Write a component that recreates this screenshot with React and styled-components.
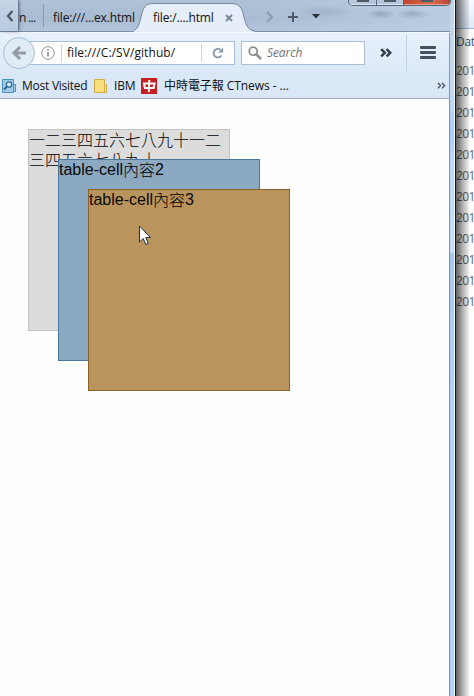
import React from "react";
import styled, { createGlobalStyle } from "styled-components";

const Global = createGlobalStyle`
  * { box-sizing: border-box; }
  body { margin: 0; background: #fff; overflow: hidden; }
`;

const Desktop = styled.div`
  display: flex;
  width: 474px;
  height: 696px;
  overflow: hidden;
  font: 12px/16px "Open Sans", "Noto Sans CJK TC", sans-serif;
  color: #111;
`;

const Browser = styled.main`
  flex: none;
  display: flex;
  flex-direction: column;
  width: 450px;
`;

const TabStrip = styled.header`
  position: relative;
  flex: none;
  display: flex;
  align-items: center;
  height: 32px;
  background:
    radial-gradient(ellipse 14px 5px at 381px 14px, #94a8bf 0, transparent 100%),
    radial-gradient(ellipse 18px 5px at 413px 14px, #98acc3 0, transparent 100%),
    radial-gradient(ellipse 30px 7px at 325px 12px, #a0b3ca 0, transparent 100%),
    linear-gradient(90deg, transparent 250px, #c5d5e890 430px),
    linear-gradient(#afc1d6, #a9bcd3 60%, #b1c4d9);
  border-bottom: 1px solid #7890ac;
`;

const ScrollLeft = styled.button`
  position: relative;
  display: grid;
  place-items: center;
  flex: none;
  width: 18px;
  height: 31px;
  padding: 0 0 0 1px;
  border: 0;
  background: linear-gradient(#c5d4e6, #b9cbe0);
  box-shadow: 1px 0 3px #435167;
`;

const Tab = styled.div`
  flex: none;
  width: ${(p) => p.$width}px;
  padding: 4px 0 0 ${(p) => p.$inset}px;
  height: 23px;
  line-height: 19px;
  white-space: nowrap;
  letter-spacing: ${(p) => p.$track || 0}px;
  border-right: ${(p) => (p.$divided ? "1px solid #8598b0" : "0")};
`;

const ActiveTab = styled.div`
  position: relative;
  flex: none;
  display: flex;
  width: 123px;
  height: 32px;
  margin-bottom: -1px;
  & > svg:first-child { position: absolute; inset: 0; }
`;

const ActiveLabel = styled.span`
  position: relative;
  width: 72px;
  margin: 10px 0 0 19px;
  line-height: 16px;
  white-space: nowrap;
  letter-spacing: -0.15px;
`;

const Close = styled.svg`
  position: relative;
  margin-top: 14px;
`;

const StripActions = styled.div`
  display: flex;
  align-items: center;
  gap: 14px;
  margin: 2px 0 0 7px;
`;

const WindowControls = styled.div`
  position: absolute;
  top: 0;
  right: -1px;
  display: flex;
  height: 6px;
  width: 103px;
  border: 1px solid #53647b;
  border-top: 0;
  border-radius: 0 0 5px 5px;
  overflow: hidden;
`;

const Control = styled.span`
  flex: 0 0 ${(p) => p.$width}px;
  display: flex;
  justify-content: center;
  border-right: 1px solid #53647b;
  background: ${(p) => (p.$danger ? "linear-gradient(90deg,#c3442d,#dc6b50 60%,#b94a39)" : "#b6c7db")};
  box-shadow: inset 0 -1px 0 ${(p) => (p.$danger ? "#e9a491" : "#d9e6f4")};
  &::before { content: ""; width: 12px; height: 2px; background: #505b6a; }
`;

const NavBar = styled.div`
  flex: none;
  display: flex;
  align-items: center;
  height: 40px;
  background: linear-gradient(#e8f1fb, #dce9f7);
  border-top: 1px solid #f2f8ff;
  border-right: 1px solid #8298b3;
  border-radius: 0 2px 0 0;
`;

const Back = styled.button`
  z-index: 1;
  flex: none;
  display: grid;
  place-items: center;
  width: 32px;
  height: 32px;
  margin: 0 -16px 0 3px;
  padding: 0;
  border: 1px solid #a9bfd8;
  border-radius: 50%;
  background: #e1ebf6;
`;

const Field = styled.div`
  flex: none;
  display: flex;
  align-items: center;
  width: ${(p) => p.$width}px;
  height: 24px;
  padding-left: ${(p) => p.$inset}px;
  margin-left: ${(p) => p.$gap || 0}px;
  background: #fff;
  border: 1px solid #a9c0da;
`;

const Separator = styled.i`
  width: 1px;
  height: ${(p) => p.$height}px;
  margin: 0 ${(p) => p.$after}px 0 ${(p) => p.$before}px;
  background: ${(p) => p.$color};
`;

const Address = styled.span`
  width: 131px;
  white-space: nowrap;
  letter-spacing: 0.07px;
`;

const Hint = styled.span`
  margin-left: 5px;
  color: #747474;
  font-style: italic;
  letter-spacing: -0.1px;
`;

const Overflow = styled.svg`
  flex: none;
  margin-left: ${(p) => p.$gap}px;
`;

const Menu = styled.div`
  display: grid;
  gap: 2px;
  & > i { width: 16px; height: 3px; border-radius: 1px; background: #46515f; }
`;

const Bookmarks = styled.nav`
  flex: none;
  display: flex;
  align-items: center;
  height: 27px;
  padding: 1px 0 0 2px;
  background: #d9e7f6;
  border-bottom: 1px solid #9db0c8;
  border-right: 1px solid #8298b3;
`;

const Bookmark = styled.div`
  display: flex;
  align-items: center;
  flex: none;
  width: ${(p) => p.$width}px;
  white-space: nowrap;
  letter-spacing: ${(p) => p.$track}px;
  & > svg { margin-right: ${(p) => p.$gap}px; flex: none; }
`;

const Page = styled.section`
  position: relative;
  flex: 1;
  background: #fefefe;
  border-right: 1px solid #7f91a6;
`;

const Box = styled.div`
  position: absolute;
  left: ${(p) => p.$x}px;
  top: ${(p) => p.$y}px;
  width: 202px;
  height: 202px;
  background: ${(p) => p.$fill};
  border: 1px solid ${(p) => p.$line};
  font: 16px/20px "Liberation Sans", "Noto Sans CJK TC", sans-serif;
  white-space: pre;
  color: #080808;
`;

const Chars = styled.span`
  display: inline-block;
  vertical-align: top;
  margin-top: -1px;
  font-family: "Noto Sans CJK TC", sans-serif;
  font-weight: 300;
  line-height: 20px;
  color: #000;
`;

const Pointer = styled.svg`
  position: absolute;
  left: 138px;
  top: 126px;
`;

const Frame = styled.div`
  flex: none;
  width: 6px;
  background: linear-gradient(#bfd2e8, #c5d9ef 90px, #a9cdf4 130px, #b9d7f7 160px, #c7dff8 252px, #a6c7ea 253px, #b2d4f8 430px);
  border-right: 1px solid #111820;
  box-shadow: inset -1px 0 #f1f8ff;
`;

const Behind = styled.aside`
  position: relative;
  flex: 1;
  background: #fff;
  overflow: hidden;
  &::after {
    content: "";
    position: absolute;
    inset: 0;
    background: linear-gradient(90deg, #0009 0, #0008 2px, #0005 6px, #0002 11px, #0001 13px, transparent 13px);
  }
`;

const BehindTop = styled.div`
  height: 29px;
  background: linear-gradient(#f7fbff, #dce9f8);
  border-bottom: 1px solid #9fb7d3;
`;

const Column = styled.div`
  padding-top: 5px;
  color: #40536c;
  white-space: nowrap;
  letter-spacing: -0.3px;
`;

const Dates = styled.div`
  margin-top: 10px;
  & > div { height: 21px; line-height: 21px; color: #65656b; letter-spacing: -0.65px; }
`;

const Chevrons = ({ gap, size, width }) => (
  <Overflow $gap={gap} width={size} height={size * 0.8} viewBox="0 0 10 8" fill="none" stroke="#343d49" strokeWidth={width}>
    <path d="M1 1l3 3-3 3M5.5 1l3 3-3 3" />
  </Overflow>
);

const boxes = [
  { x: 28, y: 30, fill: "#dcdcdc", line: "#c2c2c2" },
  { x: 58, y: 60, fill: "#8ca9c2", line: "#4a759c", num: 2 },
  { x: 88, y: 90, fill: "#b9945d", line: "#8b622b", num: 3 },
];

export default function App() {
  return (
    <Desktop>
      <Global />
      <Browser>
        <TabStrip>
          <ScrollLeft aria-label="Scroll tabs">
            <svg width="8" height="12" viewBox="0 0 8 12">
              <path d="M6.500 1L2 6l4.500 5" fill="none" stroke="#4c5561" strokeWidth="2.200" />
            </svg>
          </ScrollLeft>
          <Tab $width={26} $inset={1} $track={-0.7} $divided>n ...</Tab>
          <Tab $width={90} $inset={9} $track={-0.15}>file:///...ex.html</Tab>
          <ActiveTab>
            <svg width="123" height="32" viewBox="0 0 123 32">
              <path d="M-5 31.500C4 31 5 25 7 17C9 8 11 3.500 19 3.500H97C106 3.500 108 8 110 17C112 25 114 31 123 31.500V33H-5Z" fill="#e5eef9" />
              <path d="M-5 31.500C4 31 5 25 7 17C9 8 11 3.500 19 3.500H97C106 3.500 108 8 110 17C112 25 114 31 123 31.500" fill="none" stroke="#7087a3" />
            </svg>
            <ActiveLabel>file:/....html</ActiveLabel>
            <Close width="8" height="8" viewBox="0 0 8 8">
              <path d="M1 1l6 6M7 1L1 7" stroke="#7b8899" strokeWidth="2" />
            </Close>
          </ActiveTab>
          <StripActions>
            <svg width="10" height="12" viewBox="0 0 10 12"><path d="M3 1l5 5-5 5" fill="none" stroke="#8c9cb0" strokeWidth="2" /></svg>
            <svg width="10" height="10" viewBox="0 0 10 10"><path d="M5 0v10M0 5h10" stroke="#4d5b6b" strokeWidth="2" /></svg>
            <svg width="8" height="5" viewBox="0 0 8 5"><path d="M0 0h8L4 4.500z" fill="#26313d" /></svg>
          </StripActions>
          <WindowControls>
            <Control $width={28} />
            <Control $width={27} />
            <Control $width={46} $danger />
          </WindowControls>
        </TabStrip>
        <NavBar>
          <Back aria-label="Back">
            <svg width="16" height="16" viewBox="0 0 16 16"><path d="M9 2L3 8l6 6M3 8h12" fill="none" stroke="#949ca6" strokeWidth="3" /></svg>
          </Back>
          <Field $width={216} $inset={21}>
            <svg width="14" height="14" viewBox="0 0 14 14">
              <circle cx="7" cy="7" r="6.300" fill="none" stroke="#929292" />
              <path d="M7 6v4.500M7 3.200v1.600" stroke="#888" strokeWidth="1.600" />
            </svg>
            <Separator $height={18} $before={6} $after={5} $color="#d5d5d5" />
            <Address>file:///C:/SV/github/</Address>
            <Separator $height={18} $before={3} $after={10} $color="#d5d5d5" />
            <svg width="12" height="12" viewBox="0 0 12 12">
              <path d="M9.500 8.500A4.300 4.300 0 1 1 8.500 2.700" fill="none" stroke="#8796a8" strokeWidth="1.800" />
              <path d="M11.200 .5v5H6.200z" fill="#8796a8" />
            </svg>
          </Field>
          <Field $width={124} $inset={6} $gap={6}>
            <svg width="14" height="14" viewBox="0 0 14 14" fill="none" stroke="#929292">
              <circle cx="5.200" cy="5.200" r="4" strokeWidth="1.800" /><path d="M8 8l5 5" strokeWidth="2.500" />
            </svg>
            <Hint>Search</Hint>
          </Field>
          <Chevrons gap={15} size={12} width={2.1} />
          <Separator $height={36} $before={14} $after={13} $color="#bfd2e8" />
          <Menu><i /><i /><i /></Menu>
        </NavBar>
        <Bookmarks>
          <Bookmark $width={91} $gap={6} $track={-0.25}>
            <svg width="14" height="16" viewBox="0 0 14 16">
              <path d="M.5 1.500h11v13H.5zM11.500 6.500h2v7h-2z" fill="#9fcbe6" stroke="#4f91b8" />
              <circle cx="7" cy="6.500" r="2.700" fill="#d7effc" stroke="#28668f" strokeWidth="1.300" />
              <path d="M5 8.500l-3 3" stroke="#28668f" strokeWidth="1.800" />
            </svg>
            Most Visited
          </Bookmark>
          <Bookmark $width={48} $gap={6} $track={-0.2}>
            <svg width="15" height="16" viewBox="0 0 15 16">
              <path d="M1.500 1.500h10v5h2v8h-12z" fill="#f9df7d" stroke="#d1ae45" /><path d="M11.500 7v7" stroke="#d1ae45" />
            </svg>
            IBM
          </Bookmark>
          <Bookmark $width={150} $gap={7} $track={-0.06}>
            <svg width="16" height="16" viewBox="0 0 16 16">
              <path d="M0 0h16v16H0z" fill="#c51f23" />
              <path d="M3 5.500h10.500l-.8 4.500H3.800zM8.300 2L7.800 14" fill="none" stroke="#fff" strokeWidth="2" />
            </svg>
            中時電子報 CTnews - ...
          </Bookmark>
          <Chevrons gap={146} size={9} width={1.3} />
        </Bookmarks>
        <Page>
          {boxes.map((b) => (
            <Box key={b.x} $x={b.x} $y={b.y} $fill={b.fill} $line={b.line}>
              {b.num ? (
                <>table-cell<Chars>內容</Chars>{b.num}</>
              ) : (
                <Chars>{"一二三四五六七八九十一二\n三四五六七八九十"}</Chars>
              )}
            </Box>
          ))}
          <Pointer width="14" height="21" viewBox="0 0 14 21">
            <path d="M1.500 1v16l3.700-3.500 2.600 6 2.500-1.100-2.600-5.900h4.800z" fill="#fff" stroke="#222c46" />
          </Pointer>
        </Page>
      </Browser>
      <Frame />
      <Behind>
        <BehindTop />
        <Column>
          Date
          <Dates>
            {Array.from({ length: 12 }, (_, i) => <div key={i}>2017</div>)}
          </Dates>
        </Column>
      </Behind>
    </Desktop>
  );
}
